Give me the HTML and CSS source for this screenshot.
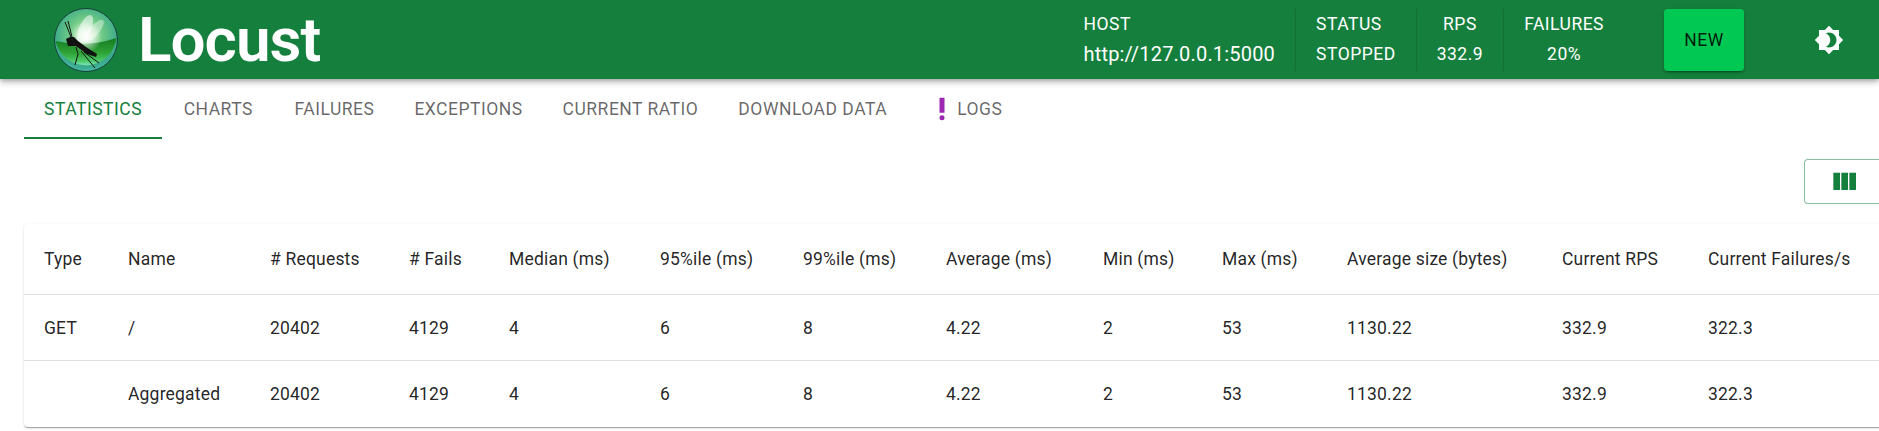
FILE: index.html
```html
<!DOCTYPE html>
<html lang="en">
<head>
<meta charset="utf-8">
<title>Locust</title>
<link rel="stylesheet" href="styles.css">
</head>
<body>
<header class="appbar">
  <div class="brand">
    <svg class="logo" viewBox="0 0 64 64" aria-hidden="true">
      <defs>
        <radialGradient id="ball" cx="0.5" cy="0.42" r="0.6">
          <stop offset="0" stop-color="#d8f8cc"/>
          <stop offset="0.45" stop-color="#6cc884"/>
          <stop offset="0.85" stop-color="#3aa98c"/>
          <stop offset="1" stop-color="#4cc4b4"/>
        </radialGradient>
        <linearGradient id="lower" x1="0" y1="0" x2="0" y2="1">
          <stop offset="0" stop-color="#137a22"/>
          <stop offset="0.55" stop-color="#2fa436"/>
          <stop offset="0.85" stop-color="#4cc86a"/>
          <stop offset="1" stop-color="#7be6b8"/>
        </linearGradient>
        <radialGradient id="glow" cx="0.5" cy="0.45" r="0.3">
          <stop offset="0" stop-color="#fff" stop-opacity="0.95"/>
          <stop offset="1" stop-color="#fff" stop-opacity="0"/>
        </radialGradient>
      </defs>
      <circle cx="32" cy="32" r="31.5" fill="url(#ball)" stroke="#17403a" stroke-width="1"/>
      <path d="M1.5 33 Q32 40 62.5 30 A 31 31 0 0 1 1.5 33 Z" fill="url(#lower)"/>
      <circle cx="32" cy="32" r="26" fill="url(#glow)"/>
      <ellipse cx="31" cy="21" rx="6" ry="15" transform="rotate(24 31 21)" fill="#fff" fill-opacity="0.55"/>
      <ellipse cx="40" cy="23" rx="5" ry="14" transform="rotate(40 40 23)" fill="#fff" fill-opacity="0.4"/>
      <path d="M12 31 L16 29 L20 29 L24 33 L32 39 L43 46 L42 49 L33 46 L26 41 L22 38 L14 38 Z" fill="#111"/>
      <path d="M17 29 L11 14 M18 29 L14 13 M22 39 L24 46 L21 57 M30 44 L45 55 M27 43 L41 60" fill="none" stroke="#111" stroke-width="1"/>
    </svg>
    <span class="wordmark">Locust</span>
  </div>
  <div class="stats">
    <div class="stat stat-start"><div class="stat-label">HOST</div><div class="stat-value stat-host">http://127.0.0.1:5000</div></div>
    <div class="stat stat-start"><div class="stat-label">STATUS</div><div class="stat-value">STOPPED</div></div>
    <div class="stat"><div class="stat-label">RPS</div><div class="stat-value">332.9</div></div>
    <div class="stat"><div class="stat-label">FAILURES</div><div class="stat-value">20%</div></div>
  </div>
  <button class="new-btn" type="button">NEW</button>
  <button class="theme-btn" type="button" aria-label="Toggle theme">
    <svg class="theme-icon" viewBox="0 0 24 24" aria-hidden="true"><path d="M20 8.69V4h-4.69L12 .69 8.69 4H4v4.69L.69 12 4 15.31V20h4.69L12 23.31 15.31 20H20v-4.69L23.31 12 20 8.69zM12 18c-.89 0-1.74-.2-2.5-.55C11.56 16.5 13 14.42 13 12s-1.44-4.5-3.5-5.45C10.26 6.2 11.11 6 12 6c3.31 0 6 2.69 6 6s-2.69 6-6 6z"/></svg>
  </button>
</header>

<nav class="tabs">
  <a class="tab tab-active">Statistics</a>
  <a class="tab">Charts</a>
  <a class="tab">Failures</a>
  <a class="tab">Exceptions</a>
  <a class="tab">Current Ratio</a>
  <a class="tab">Download Data</a>
  <a class="tab">
    <svg class="alert-icon" viewBox="0 0 24 24" aria-hidden="true"><circle cx="12" cy="19" r="2"/><path d="M10 3h4v12h-4z"/></svg>
    Logs
  </a>
</nav>

<main class="content">
  <div class="toolbar">
    <button class="columns-btn" type="button" aria-label="Columns">
      <svg class="columns-icon" viewBox="0 0 24 24" aria-hidden="true"><path d="M10 18h5V5h-5v13zm-6 0h5V5H4v13zM16 5v13h5V5h-5z"/></svg>
    </button>
  </div>
  <div class="card">
    <table class="stats-table">
      <colgroup>
        <col class="c1"><col class="c2"><col class="c3"><col class="c4"><col class="c5"><col class="c6"><col class="c7"><col class="c8"><col class="c9"><col class="c10"><col class="c11"><col class="c12"><col class="c13">
      </colgroup>
      <thead>
        <tr><th>Type</th><th>Name</th><th># Requests</th><th># Fails</th><th>Median (ms)</th><th>95%ile (ms)</th><th>99%ile (ms)</th><th>Average (ms)</th><th>Min (ms)</th><th>Max (ms)</th><th>Average size (bytes)</th><th>Current RPS</th><th>Current Failures/s</th></tr>
      </thead>
      <tbody>
        <tr><td>GET</td><td>/</td><td>20402</td><td>4129</td><td>4</td><td>6</td><td>8</td><td>4.22</td><td>2</td><td>53</td><td>1130.22</td><td>332.9</td><td>322.3</td></tr>
        <tr><td></td><td>Aggregated</td><td>20402</td><td>4129</td><td>4</td><td>6</td><td>8</td><td>4.22</td><td>2</td><td>53</td><td>1130.22</td><td>332.9</td><td>322.3</td></tr>
      </tbody>
    </table>
  </div>
</main>
</body>
</html>
```
FILE: styles.css
```css
* { box-sizing: border-box; }
html, body { height: 100%; }
body {
  margin: 0;
  overflow: hidden;
  background: #fff;
  color: rgba(0, 0, 0, 0.87);
  font-family: Roboto, "Liberation Sans", sans-serif;
  font-size: 17.5px;
}
.appbar {
  display: flex;
  align-items: center;
  height: 79px;
  padding: 0 26px 0 54px;
  background: #15803d;
  color: #fff;
  box-shadow: 0 2px 4px -1px rgba(0,0,0,.2), 0 4px 5px 0 rgba(0,0,0,.14), 0 1px 10px 0 rgba(0,0,0,.12);
  position: relative;
}
.brand { display: flex; align-items: center; gap: 20px; flex: 1; }
.logo { width: 64px; height: 64px; display: block; }
.wordmark { font-size: 62px; font-weight: 600; line-height: 1; letter-spacing: -1px; }
.stats { display: flex; height: 62px; margin-right: 40px; }
.stat {
  display: flex;
  flex-direction: column;
  align-items: center;
  justify-content: space-between;
  padding: 2px 20px 4px;
  border-left: 1px solid rgba(0, 0, 0, 0.12);
  font-size: 17.5px;
  letter-spacing: 0.5px;
  line-height: 26px;
}
.stat:first-child { border-left: 0; }
.stat-start { align-items: flex-start; }
.stat-host { font-size: 20px; letter-spacing: 0.19px; }
.new-btn {
  width: 80px;
  height: 62px;
  margin-right: 61px;
  border: 0;
  border-radius: 4px;
  background: #00c853;
  color: rgba(0, 0, 0, 0.87);
  font: 400 17.5px Roboto, sans-serif;
  letter-spacing: 0.5px;
  box-shadow: 0 3px 1px -2px rgba(0,0,0,.2), 0 2px 2px 0 rgba(0,0,0,.14), 0 1px 5px 0 rgba(0,0,0,.12);
}
.theme-btn {
  display: flex;
  align-items: center;
  justify-content: center;
  width: 48px;
  height: 48px;
  padding: 0;
  border: 0;
  background: none;
}
.theme-icon { width: 30px; height: 30px; fill: #fff; }
.tabs { display: flex; height: 60px; margin-left: 24px; align-items: stretch; }
.tab {
  display: flex;
  align-items: center;
  justify-content: center;
  gap: 0;
  min-width: 112.5px;
  padding: 1px 20px 0;
  height: 60px;
  text-transform: uppercase;
  font-size: 17.5px;
  letter-spacing: 0.5px;
  color: rgba(0, 0, 0, 0.6);
  border-bottom: 2px solid transparent;
}
.tab-active { color: #15803d; border-bottom-color: #15803d; }
.alert-icon { width: 30px; height: 30px; fill: #9c27b0; }
.content { width: 1860px; margin-left: 24px; padding-top: 20px; }
.toolbar { display: flex; justify-content: flex-end; margin-bottom: 20px; }
.columns-btn {
  display: flex;
  align-items: center;
  justify-content: center;
  width: 80px;
  height: 45px;
  padding: 0;
  background: #fff;
  border: 1px solid rgba(21, 128, 61, 0.5);
  border-radius: 4px;
}
.columns-icon { width: 32px; height: 32px; fill: #15803d; }
.card {
  border-radius: 4px;
  background: #fff;
  box-shadow: 0 2px 1px -1px rgba(0,0,0,.2), 0 1px 1px 0 rgba(0,0,0,.14), 0 1px 3px 0 rgba(0,0,0,.12);
}
.stats-table { width: 100%; table-layout: fixed; border-collapse: collapse; }
.c1 { width: 84px; } .c2 { width: 142px; } .c3 { width: 139px; } .c4 { width: 100px; }
.c5 { width: 151px; } .c6 { width: 143px; } .c7 { width: 143px; } .c8 { width: 157px; }
.c9 { width: 119px; } .c10 { width: 125px; } .c11 { width: 215px; } .c12 { width: 146px; } .c13 { width: 196px; }
th, td {
  padding: 1px 0 0 20px;
  text-align: left;
  font-weight: 400;
  font-size: 17.5px;
  letter-spacing: 0.19px;
  white-space: nowrap;
  border-bottom: 1px solid rgb(224, 224, 224);
}
th { height: 70px; }
td { height: 66px; }
tbody tr:last-child td { border-bottom: 0; height: 67px; }
```
